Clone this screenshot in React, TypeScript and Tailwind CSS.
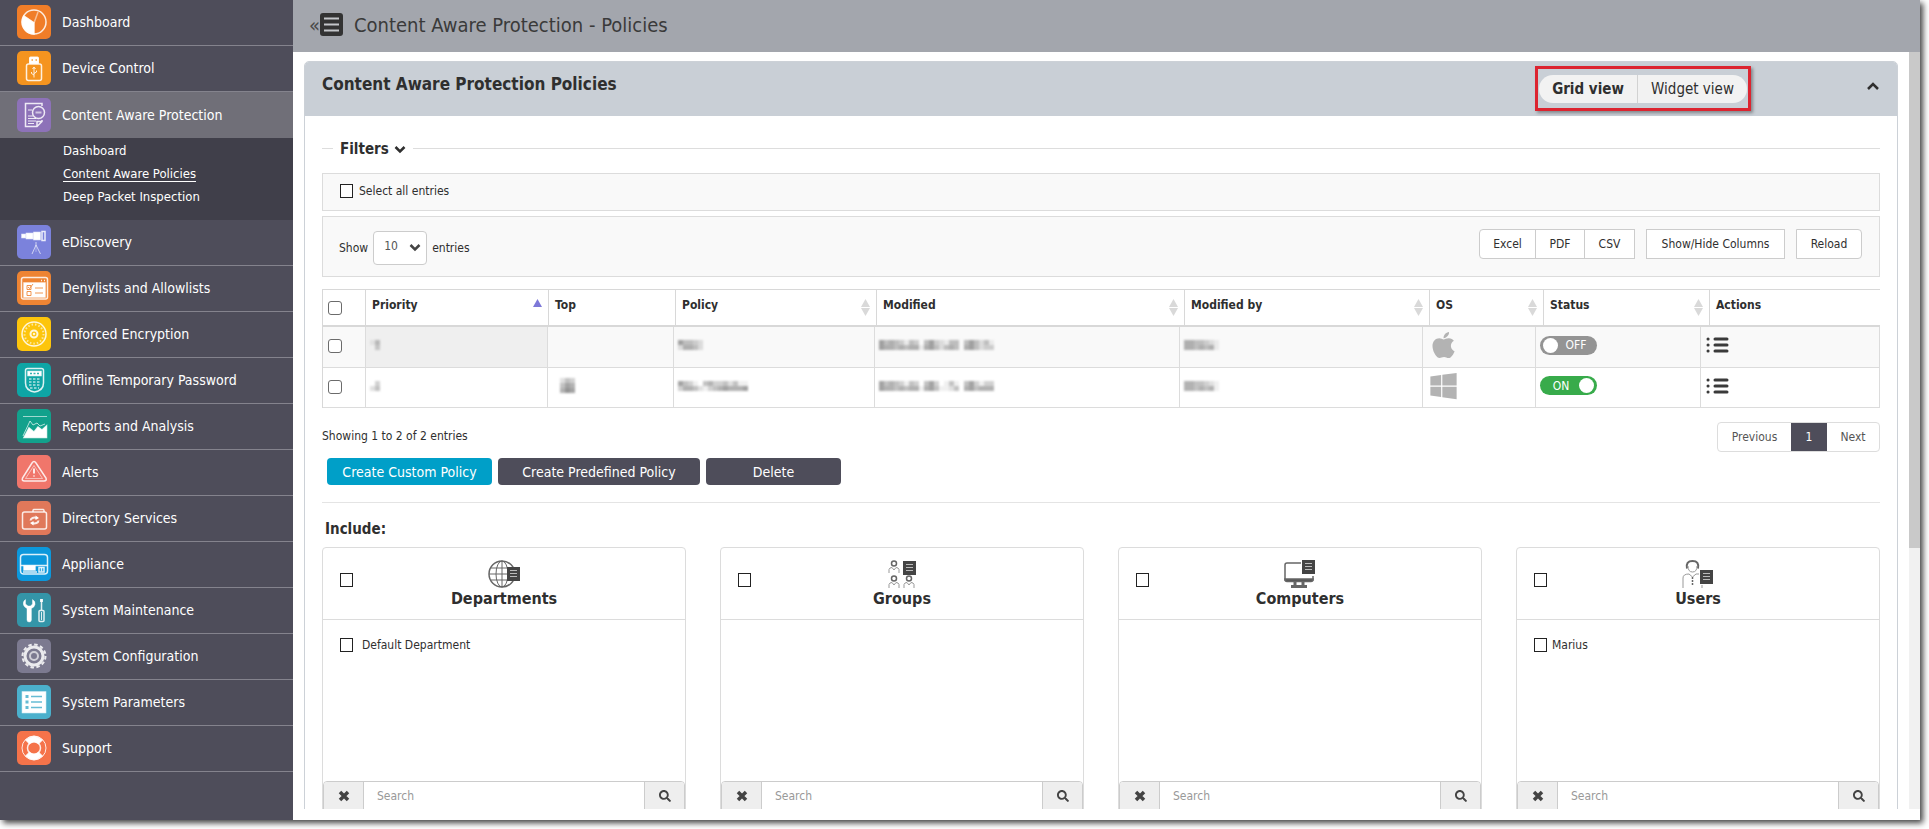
import { useState } from 'react';
import type { ReactNode } from 'react';
import { FaApple, FaWindows, FaSearch } from 'react-icons/fa';

interface MenuItem {
  label: string;
  color: string;
  icon: ReactNode;
  active?: boolean;
  children?: { label: string; current?: boolean }[];
}

const MENU: MenuItem[] = [
  {
    label: 'Dashboard',
    color: 'bg-[#f07d28]',
    icon: (
      <>
        <circle cx="17" cy="17" r="12" />
        <path d="M17 18 8 12M17 18l4-11" opacity="0.6" />
        <path d="M17 18v11A12 12 0 0 1 7 11Z" fill="white" />
      </>
    ),
  },
  {
    label: 'Device Control',
    color: 'bg-[#f5941f]',
    icon: (
      <>
        <rect x="9.500" y="13" width="15" height="16.500" rx="2" />
        <path d="M12.500 12.500V7q0-1 1-1h7q1 0 1 1v5.500Z" fill="white" strokeWidth="1" />
        <path d="M14.500 9h1.500M18.500 9h1.500" stroke="#f5941f" />
        <path d="M17 26.500V17m0 7-2.500-1.500V21m2.500 1.500 2.500-1.500v-1.500M15.500 18 17 16l1.500 2" strokeWidth="1" />
      </>
    ),
  },
  {
    label: 'Content Aware Protection',
    color: 'bg-[#8d72b8]',
    active: true,
    icon: (
      <>
        <path d="M25 8V5.500H8.500v23H20l5-5V22M20 28.500v-5h5" />
        <path d="M11 12h4M11 18h5M11 20.500h8M11 23h8M11 25.500h6" strokeWidth="1" />
        <circle cx="21.500" cy="14.500" r="6" />
        <path d="M18.500 14.500h6" strokeWidth="2" opacity="0.7" />
      </>
    ),
    children: [
      { label: 'Dashboard' },
      { label: 'Content Aware Policies', current: true },
      { label: 'Deep Packet Inspection' },
    ],
  },
  {
    label: 'eDiscovery',
    color: 'bg-[#7b82dc]',
    icon: (
      <>
        <path d="M5 9.500h3v3H5ZM9.500 8.500h6v5h-6ZM17 7.500h6v7h-6Z" fill="white" />
        <path d="M25 6.500h3v9h-3Z" />
        <path d="M19 17v3l-4 9M19 20l4.500 9" opacity="0.75" strokeWidth="1" />
        <path d="M19 20v7" opacity="0.4" strokeWidth="1" />
      </>
    ),
  },
  {
    label: 'Denylists and Allowlists',
    color: 'bg-[#ee8433]',
    icon: (
      <>
        <rect x="4.500" y="6.500" width="26" height="21.500" rx="2" />
        <path d="M7 12h21v14H7Z" fill="white" />
        <path d="M24 9.500h1M27 9.500h1" />
        <path d="M10 14.500h4v4h-4ZM10 20.500h4v4h-4ZM11 16l1.500 1.500L16 13M18 17h8M18 22h8" stroke="#ee8433" strokeWidth="1" />
      </>
    ),
  },
  {
    label: 'Enforced Encryption',
    color: 'bg-[#fdc50c]',
    icon: (
      <>
        <circle cx="17" cy="17" r="12" />
        <circle cx="17" cy="17" r="9.500" strokeDasharray="1.500 2" strokeWidth="2" opacity="0.7" />
        <circle cx="17" cy="17" r="3.500" strokeWidth="2" />
        <circle cx="17" cy="17" r="0.500" />
      </>
    ),
  },
  {
    label: 'Offline Temporary Password',
    color: 'bg-[#0ea5a5]',
    icon: (
      <>
        <path d="M8.500 7.500q0-2 2-2h14q2 0 2 2V20q0 7.500-9 9-9-1.500-9-9Z" />
        <path d="M11 8.500h13v4H11Z" fill="white" />
        <path d="M13 10.500h9" stroke="#0ea5a5" strokeDasharray="2 1.500" />
        <path d="M12 16h11M12 19h11M12 22h11M13 25h9" strokeDasharray="2.500 1.500" strokeWidth="1.800" opacity="0.6" />
      </>
    ),
  },
  {
    label: 'Reports and Analysis',
    color: 'bg-[#12a18c]',
    icon: (
      <>
        <path d="M6 7.500h24" strokeWidth="1" opacity="0.7" />
        <path d="M6 27 13 12l3 4 4-2 3 3 5-2" strokeWidth="1" opacity="0.8" />
        <path d="M7 28.500 12 19l5 4 4-5 4 3 4.500-4v11.500Z" fill="white" />
      </>
    ),
  },
  {
    label: 'Alerts',
    color: 'bg-[#f0766b]',
    icon: (
      <>
        <path d="M15 8q2-3 4 0l10 15q1 3-2 3H7.500q-3 0-2-3Z" />
        <path d="m17 10.500 8.500 13h-17Z" strokeWidth="1" opacity="0.6" />
        <path d="M17 13.500v5M17 20.500v1" strokeWidth="2" />
      </>
    ),
  },
  {
    label: 'Directory Services',
    color: 'bg-[#e0785a]',
    icon: (
      <>
        <rect x="5.500" y="11" width="24" height="17" rx="2" />
        <path d="M16 11V9.500q0-1 1-1h9q1 0 1 1V11" />
        <path d="M13.500 19.500a4 3 0 0 1 6-2.500M21.500 19.500a4 3 0 0 1-6 2.500" strokeWidth="2" />
        <path d="m18.500 14.500 3.500 2.500-3.500 2ZM16.500 20l-3.500 2 3.500 2.500Z" fill="white" stroke="none" />
      </>
    ),
  },
  {
    label: 'Appliance',
    color: 'bg-[#0c98dc]',
    icon: (
      <>
        <rect x="3.500" y="7.500" width="27" height="19.500" rx="3" />
        <path d="M3.500 18.500h27" />
        <path d="M7 19h11v4H7Z" fill="white" />
        <path d="M6 25h14" />
        <rect x="22" y="20.500" width="5" height="4.500" />
        <path d="M24.500 20.500v4" />
      </>
    ),
  },
  {
    label: 'System Maintenance',
    color: 'bg-[#3495a8]',
    icon: (
      <>
        <path
          d="M8.500 6.500Q5.500 8.500 6.500 12q1 2.500 3.500 3.500V27q0 2 2.200 2t2.200-2V15.500q3-1 3.600-4 .5-3.500-2.500-5v4.500l-2 2h-2.500l-2.500-2Z"
          fill="white"
          strokeWidth="0.500"
        />
        <path d="M24.500 6v11" strokeWidth="1.500" />
        <path d="M24.500 6v3" strokeWidth="3" />
        <rect x="22" y="17.500" width="5" height="11" rx="1" />
        <path d="M24.500 19v8" strokeWidth="1" />
      </>
    ),
  },
  {
    label: 'System Configuration',
    color: 'bg-[#7c7a90]',
    icon: (
      <>
        <circle cx="17" cy="17" r="9" strokeWidth="3" />
        <circle cx="17" cy="17" r="11.500" strokeWidth="2" strokeDasharray="3.500 2.500" />
        <circle cx="17" cy="17" r="4" strokeWidth="2" opacity="0.75" />
      </>
    ),
  },
  {
    label: 'System Parameters',
    color: 'bg-[#4bb0cc]',
    icon: (
      <>
        <path d="M5.500 7h23v20.500h-23Z" fill="white" />
        <path d="M14 11.500h11M14 17h11M14 22.500h11" stroke="#4bb0cc" strokeWidth="1.500" />
        <path d="M8.500 11.500h3M8.500 17h3M8.500 22.500h3" stroke="#4bb0cc" strokeWidth="3" />
      </>
    ),
  },
  {
    label: 'Support',
    color: 'bg-[#f5734a]',
    icon: (
      <>
        <circle cx="17" cy="17" r="12" strokeWidth="1" />
        <circle cx="17" cy="17" r="6.500" strokeWidth="1.500" />
        <path d="M9 9q8-7 16 0l-3.500 3.500q-4.500-3.500-9 0ZM9 25q8 7 16 0l-3.500-3.500q-4.500 3.500-9 0Z" fill="white" />
      </>
    ),
  },
];

// Each digit is the darkness of one mosaic tile
interface PolicyRow {
  priority: string[];
  top: string[];
  policy: string[];
  modified: string[];
  modifiedBy: string[];
  os: 'mac' | 'windows';
  enabled: boolean;
}

const POLICIES: PolicyRow[] = [
  {
    priority: ['14', '03'],
    top: [],
    policy: ['64432', '25542'],
    modified: ['64543143046321440464241', '65545455156424540564233'],
    modifiedBy: ['5544321', '5545451'],
    os: 'mac',
    enabled: false,
  },
  {
    priority: ['03', '24'],
    top: ['243', '465', '576'],
    policy: ['64310453342411', '35542134565556'],
    modified: ['64543143046301410463133', '65545455156411240564555'],
    modifiedBy: ['5544321', '5545451'],
    os: 'windows',
    enabled: true,
  },
];

const HEAD_COLUMNS = [
  { label: 'Priority', width: 183, sort: 'asc' },
  { label: 'Top', width: 127, sort: 'none' },
  { label: 'Policy', width: 201, sort: 'both' },
  { label: 'Modified', width: 308, sort: 'both' },
  { label: 'Modified by', width: 245, sort: 'both' },
  { label: 'OS', width: 114, sort: 'both' },
  { label: 'Status', width: 166, sort: 'both' },
  { label: 'Actions', width: 170, sort: 'none' },
];

const BODY_WIDTHS = [43, 182, 126, 201, 305, 243, 113, 165, 179];

function Chevron({ up = false }: { up?: boolean }) {
  return (
    <svg
      width="12"
      height="10"
      viewBox="0 0 12 10"
      fill="none"
      stroke="currentColor"
      strokeWidth="2.500"
      className="block"
      aria-hidden="true"
    >
      <path d={up ? 'M1 8l5-5 5 5' : 'M1.500 3 6 7.500 10.500 3'} />
    </svg>
  );
}

function Mosaic({ tiles }: { tiles: string[] }) {
  if (tiles.length === 0) return null;
  return (
    <svg width={tiles[0].length * 5} height={tiles.length * 5} className="block blur-[1px]" aria-hidden="true">
      {tiles.map((row, y) =>
        row
          .split('')
          .map((shade, x) => (
            <rect key={`${x}-${y}`} x={x * 5} y={y * 5} width="5" height="5" fill="#555" opacity={Number(shade) * 0.09} />
          ))
      )}
    </svg>
  );
}

function SquareCheckbox({ id, label }: { id: string; label?: string }) {
  return (
    <input
      id={id}
      type="checkbox"
      aria-label={label}
      className="h-[14px] w-[13px] shrink-0 appearance-none border border-[#222] bg-white checked:bg-[#4e4d5a]"
    />
  );
}

function RowCheckbox({ label }: { label: string }) {
  return (
    <input
      type="checkbox"
      aria-label={label}
      className="block h-[14px] w-[14px] appearance-none rounded-[3px] border border-[#6b6b6b] bg-white checked:bg-[#4e4d5a]"
    />
  );
}

function SortIcon({ sort }: { sort: string }) {
  if (sort === 'none') return null;
  return (
    <svg width="9" height="17" viewBox="0 0 9 17" className="mt-[9px] shrink-0" aria-hidden="true">
      <path d="M4.500 0 9 8H0Z" fill={sort === 'asc' ? '#7d78d8' : '#d9d9d9'} />
      {sort === 'both' && <path d="M0 9h9l-4.500 8Z" fill="#d9d9d9" />}
    </svg>
  );
}

function StatusToggle({ initial, label }: { initial: boolean; label: string }) {
  const [on, setOn] = useState(initial);
  return (
    <label
      className={`
        flex h-[19px] w-[57px] cursor-pointer items-center rounded-full px-[3px] text-white
        ${on ? 'flex-row-reverse bg-[#38ab4b]' : 'bg-[#949494]'}
      `}
    >
      <input
        type="checkbox"
        checked={on}
        onChange={(e) => setOn(e.target.checked)}
        aria-label={label}
        className="h-[15px] w-[15px] appearance-none rounded-full bg-white"
      />
      <span className="flex-1 text-center">{on ? 'ON' : 'OFF'}</span>
    </label>
  );
}

function Sidebar() {
  return (
    <nav className="w-[293px] shrink-0 bg-[#4e4d5a] text-white">
      <ul>
        {MENU.map((item) => (
          <li key={item.label}>
            <a
              href="#"
              className={`flex h-[46px] items-center gap-[11px] pb-px pl-[17px] text-sm ${
                item.active ? 'bg-[#706f78]' : 'border-b border-[#84838d]'
              }`}
            >
              <span className={`rounded-[5px] ${item.color}`}>
                <svg
                  width="34"
                  height="34"
                  viewBox="0 0 34 34"
                  fill="none"
                  stroke="white"
                  strokeWidth="1.500"
                  strokeOpacity="0.85"
                  className="block"
                  aria-hidden="true"
                >
                  {item.icon}
                </svg>
              </span>
              {item.label}
            </a>
            {item.children && (
              <ul className="flex h-[82px] flex-col gap-[5px] bg-[#403f4a] pt-1 pl-[63px] text-[13px] leading-[18px]">
                {item.children.map((child) => (
                  <li key={child.label}>
                    <a href="#" className={child.current ? 'border-b border-white' : ''}>
                      {child.label}
                    </a>
                  </li>
                ))}
              </ul>
            )}
          </li>
        ))}
      </ul>
    </nav>
  );
}

function ListBadge({ x, y }: { x: number; y: number }) {
  return (
    <g transform={`translate(${x} ${y})`}>
      <rect width="13" height="14" fill="#444" stroke="none" />
      <path d="M3 3.500h7M3 6.500h7M3 9.500h7" stroke="#bbb" strokeWidth="1" />
    </g>
  );
}

function Person({ x, y }: { x: number; y: number }) {
  return (
    <g transform={`translate(${x} ${y})`}>
      <circle cx="5" cy="3.500" r="2.500" />
      <path d="M0 13V9.500q.5-2 3-2L5 10l2-2.500q2.500 0 3 2V13" stroke="#999" strokeWidth="1" />
    </g>
  );
}

const ENTITY_CARDS: { title: string; icon: ReactNode; entries: string[]; gap: string }[] = [
  {
    title: 'Departments',
    entries: ['Default Department'],
    gap: 'gap-[9px]',
    icon: (
      <>
        <circle cx="14" cy="14" r="13" />
        <ellipse cx="14" cy="14" rx="6" ry="13" strokeWidth="1" />
        <path d="M14 1v26M1 14h26M3 8h22M3 20h22" strokeWidth="1" />
        <ListBadge x={19} y={7} />
      </>
    ),
  },
  {
    title: 'Groups',
    entries: [],
    gap: 'gap-1',
    icon: (
      <>
        <Person x={3} y={0} />
        <Person x={3} y={15} />
        <Person x={18} y={15} />
        <ListBadge x={17} y={1} />
      </>
    ),
  },
  {
    title: 'Computers',
    entries: [],
    gap: 'gap-1',
    icon: (
      <>
        <path d="M17 3H3q-2 0-2 2v15h28v-4" strokeWidth="1.500" />
        <path d="M1 19h28q0 2.500-2 2.500H3Q1 21.500 1 19Z" fill="#555" />
        <path d="M11 22v3M19 22v3M7 26.500h16" strokeWidth="3" />
        <ListBadge x={18} y={0} />
      </>
    ),
  },
  {
    title: 'Users',
    entries: ['Marius'],
    gap: 'gap-[5px]',
    icon: (
      <>
        <path d="M5 8.500Q3.500 1 10.500 1T16 8.500" strokeWidth="2" />
        <path d="M6 6q0 6 4.500 6T15 6" stroke="#999" strokeWidth="1" />
        <path d="M1 28V18q0-4 6-4l3.500 3 3.500-3h3" stroke="#999" strokeWidth="1" />
        <path d="M10.500 17v8" strokeDasharray="2 1" />
        <ListBadge x={18} y={10} />
        <path d="M20 25v3" stroke="#999" strokeWidth="1" />
      </>
    ),
  },
];

function EntityCard({ title, icon, entries, gap }: (typeof ENTITY_CARDS)[number]) {
  const id = title.toLowerCase();
  return (
    <section className="rounded-[4px] border border-[#dcdcdc]">
      <div className="grid h-[72px] grid-cols-[1fr_auto_1fr] border-b border-[#dcdcdc] px-[17px]">
        <span className="flex items-center pb-2">
          <SquareCheckbox id={`all-${id}`} label={`Select all ${title}`} />
        </span>
        <div className="flex flex-col items-center pt-3">
          <svg width="32" height="28" viewBox="0 0 32 28" fill="none" stroke="#666" strokeWidth="1.500" aria-hidden="true">
            {icon}
          </svg>
          <h3 className="text-base leading-[22px] font-bold">{title}</h3>
        </div>
      </div>
      <ul className="h-[161px] px-[17px] pt-[17px]">
        {entries.map((entry) => (
          <li key={entry} className={`flex items-center ${gap}`}>
            <SquareCheckbox id={`entry-${entry}`} />
            <label htmlFor={`entry-${entry}`}>{entry}</label>
          </li>
        ))}
      </ul>
      <div className="flex h-9 overflow-hidden rounded-[4px] border border-[#ccc]">
        <button aria-label="Clear search" className="flex w-10 items-center justify-center border-r border-[#ccc] bg-[#eee] pb-[7px]">
          <svg width="12" height="12" viewBox="0 0 12 12" stroke="#444" strokeWidth="3.500" aria-hidden="true">
            <path d="m2 2 8 8M10 2l-8 8" />
          </svg>
        </button>
        <input
          type="text"
          aria-label={`Search ${title}`}
          placeholder="Search"
          className="min-w-0 flex-1 px-[13px] pb-[7px] placeholder:text-[#999] outline-none"
        />
        <button aria-label="Search" className="flex w-10 items-center justify-center border-l border-[#ccc] bg-[#eee] pb-[7px]">
          <FaSearch className="h-3 w-3 text-[#444]" />
        </button>
      </div>
    </section>
  );
}

function PoliciesTable() {
  return (
    <div className="mt-3">
      <table className="w-full table-fixed border-separate border-spacing-0 border-t border-l border-[#d8d8d8] text-left">
        <thead>
          <tr>
            <th className="h-[37px] w-[43px] border-r border-b-2 border-[#d8d8d8] pl-[5px]">
              <RowCheckbox label="Select all policies" />
            </th>
            {HEAD_COLUMNS.map((col) => (
              <th
                key={col.label}
                style={{ width: col.width }}
                className="border-r border-b-2 border-[#d8d8d8] pr-[6px] pl-[6px] align-top font-bold last:border-r-0"
              >
                <div className="flex justify-between">
                  <span className="pt-[7px]">{col.label}</span>
                  <SortIcon sort={col.sort} />
                </div>
              </th>
            ))}
          </tr>
        </thead>
      </table>
      <table className="w-full table-fixed border-separate border-spacing-0 border-l border-[#d8d8d8]">
        <colgroup>
          {BODY_WIDTHS.map((width, i) => (
            <col key={i} style={{ width }} />
          ))}
        </colgroup>
        <tbody className="[&_td]:border-r [&_td]:border-b [&_td]:border-[#dcdcdc] [&_td]:px-1 [&_td]:pb-1">
          {POLICIES.map((row, i) => (
            <tr key={row.os} className={i === 0 ? 'h-[41px] bg-[#f9f9f9]' : 'h-10 bg-white'}>
              <td>
                <div className="pt-0.5 pl-px">
                  <RowCheckbox label={`Select policy ${i + 1}`} />
                </div>
              </td>
              <td className={i === 0 ? 'bg-[#efefef]' : ''}>
                <Mosaic tiles={row.priority} />
              </td>
              <td>
                <div className="pl-2">
                  <Mosaic tiles={row.top} />
                </div>
              </td>
              <td>
                <Mosaic tiles={row.policy} />
              </td>
              <td>
                <Mosaic tiles={row.modified} />
              </td>
              <td>
                <Mosaic tiles={row.modifiedBy} />
              </td>
              <td>
                <div className="pl-[3px]">
                  {row.os === 'mac' ? (
                    <FaApple className="h-[30px] w-[27px] text-[#b3b3b3]" title="macOS" />
                  ) : (
                    <FaWindows className="h-[30px] w-[27px] text-[#b3b3b3]" title="Windows" />
                  )}
                </div>
              </td>
              <td>
                <StatusToggle initial={row.enabled} label={`Status of policy ${i + 1}`} />
              </td>
              <td>
                <button aria-label="Actions" className="block">
                  <svg width="24" height="16" viewBox="0 0 24 16" stroke="#3a3a3a" strokeWidth="3" strokeLinecap="round" aria-hidden="true">
                    <path d="M3 2h.1M3 8h.1M3 14h.1M10 2h12M10 8h12M10 14h12" />
                  </svg>
                </button>
              </td>
            </tr>
          ))}
        </tbody>
      </table>
    </div>
  );
}

function PoliciesPanel() {
  const [view, setView] = useState<'grid' | 'widget'>('grid');

  return (
    <section className="rounded-t-[5px] border border-[#ccd1d7]">
      <header className="flex h-[54px] items-start justify-between rounded-t-[4px] bg-[#c9cfd6] pr-[18px] pl-[17px]">
        <h2 className="pt-[11px] text-[17px] leading-[22px] font-bold">Content Aware Protection Policies</h2>
        <div className="flex items-start gap-[116px]">
          <div className="mt-1 border-[3px] border-[#dc2430] px-px pt-[6px] pb-[5px] shadow-[2px_2px_3px_rgba(0,0,0,0.35)]">
            <div className="flex h-7 overflow-hidden rounded-full bg-[#f2f2f2] text-[15px]">
              <button
                onClick={() => setView('grid')}
                aria-pressed={view === 'grid'}
                className={`w-[99px] border-r border-[#d2d2d2] pt-0.5 ${view === 'grid' ? 'font-bold' : ''}`}
              >
                Grid view
              </button>
              <button
                onClick={() => setView('widget')}
                aria-pressed={view === 'widget'}
                className={`w-[109px] pt-0.5 ${view === 'widget' ? 'font-bold' : ''}`}
              >
                Widget view
              </button>
            </div>
          </div>
          <button aria-label="Collapse panel" className="pt-[19px]">
            <Chevron up />
          </button>
        </div>
      </header>

      <div className="px-[17px] pt-[21px]">
        {/* Filters */}
        <div className="flex items-center">
          <span className="h-px w-[11px] bg-[#ddd]" />
          <button className="flex items-center gap-[5px] px-[7px] pt-0.5 text-[15px] leading-[20px] font-bold">
            Filters
            <Chevron />
          </button>
          <span className="h-px flex-1 bg-[#ddd]" />
        </div>
        <div className="mt-[14px] flex h-[38px] items-center gap-[6px] border border-[#dcdcdc] bg-[#f9f9f9] px-[17px] pb-0.5">
          <SquareCheckbox id="select-all-entries" />
          <label htmlFor="select-all-entries">Select all entries</label>
        </div>

        {/* Table toolbar */}
        <div className="mt-[5px] flex h-[61px] items-start justify-between border border-[#dcdcdc] bg-[#f9f9f9] pr-[17px] pl-4">
          <label className="flex items-center gap-[5px] pt-[14px]">
            Show
            <span className="relative">
              <select defaultValue="10" className="block h-[34px] w-[54px] appearance-none rounded-[4px] border border-[#ccc] bg-white pb-1 pl-[10px] text-[#555]">
                <option>10</option>
                <option>25</option>
                <option>50</option>
              </select>
              <span className="pointer-events-none absolute top-[11px] right-[6px] text-[#444]">
                <Chevron />
              </span>
            </span>
            entries
          </label>
          <div className="flex gap-[11px] pt-[12px] [&_button]:h-[30px] [&_button]:border [&_button]:border-[#ccc] [&_button]:bg-white">
            <div className="flex">
              <button className="w-[57px] rounded-l-[4px]">Excel</button>
              <button className="-ml-px w-[50px]">PDF</button>
              <button className="-ml-px w-[51px]">CSV</button>
            </div>
            <button className="w-[139px]">Show/Hide Columns</button>
            <button className="w-[66px] rounded-r-[4px]">Reload</button>
          </div>
        </div>

        <PoliciesTable />

        <div className="mt-[14px] flex h-[30px] justify-between">
          <p className="pt-[6px]">Showing 1 to 2 of 2 entries</p>
          <div className="flex overflow-hidden rounded-[4px] border border-[#ddd] text-[#555]">
            <button className="w-[73px]">Previous</button>
            <button aria-current="page" className="-my-px w-9 bg-[#4e4d5a] text-white">
              1
            </button>
            <button className="w-[52px]">Next</button>
          </div>
        </div>
        <div className="mt-[6px] flex gap-[6px] pl-[5px] text-sm text-white">
          <button className="h-[27px] w-[165px] rounded-[4px] bg-[#009fc8]">Create Custom Policy</button>
          <button className="h-[27px] w-[202px] rounded-[4px] bg-[#4e4d5a]">Create Predefined Policy</button>
          <button className="h-[27px] w-[135px] rounded-[4px] bg-[#4e4d5a]">Delete</button>
        </div>
        <hr className="mt-[17px] border-[#e4e4e4]" />

        <h2 className="mt-[15px] pl-[3px] text-[15px] leading-[22px] font-bold">Include:</h2>
        <div className="mt-[7px] grid grid-cols-4 gap-[34px]">
          {ENTITY_CARDS.map((card) => (
            <EntityCard key={card.title} {...card} />
          ))}
        </div>
      </div>
    </section>
  );
}

export default function App() {
  return (
    <div className="h-screen overflow-hidden bg-white pr-[9px] pb-[9px] font-['DejaVu_Sans_Condensed','DejaVu_Sans',sans-serif] text-xs text-[#2f2f2f]">
      <div className="flex h-full bg-white shadow-[3px_3px_6px_rgba(0,0,0,0.75)]">
        <Sidebar />
        <main className="flex min-w-0 flex-1 flex-col">
          <div className="flex h-[52px] shrink-0 items-center bg-[#a3a6ad] pb-[3px] pl-4">
            <button aria-label="Collapse menu" className="text-xl leading-none text-[#4a4a4a]">
              «
            </button>
            <svg width="23" height="23" viewBox="0 0 23 23" aria-hidden="true">
              <rect width="23" height="23" rx="3" fill="#333" />
              <path d="M4 5.500h15M4 11.500h15M4 17.500h15" stroke="#c4c6ca" strokeWidth="2" />
            </svg>
            <h1 className="pl-[11px] text-xl text-[#3a3a3a]">Content Aware Protection - Policies</h1>
          </div>
          <div className="mb-[11px] flex min-h-0 flex-1">
            <div className="min-w-0 flex-1 overflow-hidden px-[11px] pt-[9px]">
              <PoliciesPanel />
            </div>
            <div className="w-[11px] bg-[#f1f1f1]">
              <div className="h-[496px] bg-[#c9c9c9]" />
            </div>
          </div>
        </main>
      </div>
    </div>
  );
}
